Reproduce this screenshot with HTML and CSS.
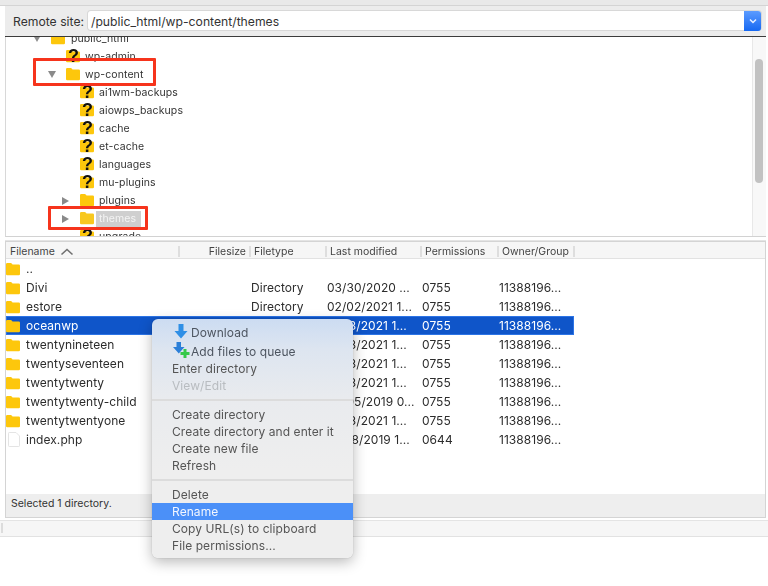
FILE: index.html
```html
<!DOCTYPE html>
<html lang="en">
<head>
<meta charset="utf-8">
<title>Remote site</title>
<link rel="stylesheet" href="styles.css">
</head>
<body>
<svg class="defs" width="0" height="0" aria-hidden="true">
  <symbol id="folder" viewBox="0 0 14 14">
    <path d="M0 2.2Q0 1 1.2 1H4.6Q5.4 1 6 1.8L6.5 2.5H12.8Q14 2.5 14 3.7V12Q14 13.2 12.8 13.2H1.2Q0 13.2 0 12Z" fill="#fdc70c"/>
  </symbol>
  <symbol id="unknown" viewBox="0 0 14 16">
    <path d="M0 3.2Q0 2 1.2 2H4.6Q5.4 2 6 2.8L6.5 3.5H12.8Q14 3.5 14 4.7V13Q14 14.2 12.8 14.2H1.2Q0 14.2 0 13Z" fill="#fdc70c"/>
    <text x="7.5" y="14.2" text-anchor="middle" class="qmark">?</text>
  </symbol>
  <symbol id="file" viewBox="0 0 12 15">
    <path d="M.5 1.2Q.5.5 1.2.5H8L11.5 4V13.8Q11.5 14.5 10.8 14.5H1.2Q.5 14.5.5 13.8Z" fill="#fff" stroke="#e4e4e4"/>
  </symbol>
</svg>
<div class="app">
  <div class="topstrip"></div>
  <div class="sitebar">
    <span class="sitelabel">Remote site:</span>
    <div class="sitefield">
      <span class="sitepath">/public_html/wp-content/themes</span>
      <span class="dropbtn"><svg width="8" height="6" viewBox="0 0 8 6"><path d="M1 1.5L4 4.5L7 1.5" fill="none" stroke="#e8f0ff" stroke-width="1.5"/></svg></span>
    </div>
  </div>
  <section class="tree">
    <div class="treebody">
      <div class="trow lvl1"><span class="tw"><i class="tri down"></i></span><svg class="ic"><use href="#folder"/></svg><span>public_html</span></div>
      <div class="trow lvl2"><span class="tw"></span><svg class="ic q"><use href="#unknown"/></svg><span>wp-admin</span></div>
      <div class="trow lvl2"><span class="tw"><i class="tri down"></i></span><svg class="ic"><use href="#folder"/></svg><span>wp-content</span></div>
      <div class="trow lvl3"><span class="tw"></span><svg class="ic q"><use href="#unknown"/></svg><span>ai1wm-backups</span></div>
      <div class="trow lvl3"><span class="tw"></span><svg class="ic q"><use href="#unknown"/></svg><span>aiowps_backups</span></div>
      <div class="trow lvl3"><span class="tw"></span><svg class="ic q"><use href="#unknown"/></svg><span>cache</span></div>
      <div class="trow lvl3"><span class="tw"></span><svg class="ic q"><use href="#unknown"/></svg><span>et-cache</span></div>
      <div class="trow lvl3"><span class="tw"></span><svg class="ic q"><use href="#unknown"/></svg><span>languages</span></div>
      <div class="trow lvl3"><span class="tw"></span><svg class="ic q"><use href="#unknown"/></svg><span>mu-plugins</span></div>
      <div class="trow lvl3"><span class="tw"><i class="tri right"></i></span><svg class="ic"><use href="#folder"/></svg><span>plugins</span></div>
      <div class="trow lvl3"><span class="tw"><i class="tri right"></i></span><svg class="ic dark"><use href="#folder"/></svg><span class="picked">themes</span></div>
      <div class="trow lvl3"><span class="tw"></span><svg class="ic q"><use href="#unknown"/></svg><span>upgrade</span></div>
      <div class="mark mark-content"></div>
      <div class="mark mark-themes"></div>
    </div>
    <div class="scrolltrack"><div class="scrollthumb"></div></div>
  </section>
  <section class="list">
    <div class="lhead">
      <span class="hname">Filename <svg width="14" height="8" viewBox="0 0 14 8"><path d="M1.5 6.5L7 1.5L12.5 6.5" fill="none" stroke="#707070" stroke-width="1.6"/></svg></span>
      <span class="hsize">Filesize</span>
      <span>Filetype</span>
      <span>Last modified</span>
      <span>Permissions</span>
      <span>Owner/Group</span>
    </div>
    <div class="lrows">
      <div class="lrow"><span class="cname"><svg class="ficon"><use href="#folder"/></svg>..</span></div>
      <div class="lrow"><span class="cname"><svg class="ficon"><use href="#folder"/></svg>Divi</span><span>Directory</span><span>03/30/2020 ...</span><span>0755</span><span>11388196...</span></div>
      <div class="lrow"><span class="cname"><svg class="ficon"><use href="#folder"/></svg>estore</span><span>Directory</span><span>02/02/2021 1...</span><span>0755</span><span>11388196...</span></div>
      <div class="lrow selected"><span class="cname"><svg class="ficon"><use href="#folder"/></svg>oceanwp</span><span>Directory</span><span>01/18/2021 1...</span><span>0755</span><span>11388196...</span></div>
      <div class="lrow"><span class="cname"><svg class="ficon"><use href="#folder"/></svg>twentynineteen</span><span>Directory</span><span>01/18/2021 1...</span><span>0755</span><span>11388196...</span></div>
      <div class="lrow"><span class="cname"><svg class="ficon"><use href="#folder"/></svg>twentyseventeen</span><span>Directory</span><span>01/18/2021 1...</span><span>0755</span><span>11388196...</span></div>
      <div class="lrow"><span class="cname"><svg class="ficon"><use href="#folder"/></svg>twentytwenty</span><span>Directory</span><span>01/18/2021 1...</span><span>0755</span><span>11388196...</span></div>
      <div class="lrow"><span class="cname"><svg class="ficon"><use href="#folder"/></svg>twentytwenty-child</span><span>Directory</span><span>03/05/2019 0...</span><span>0755</span><span>11388196...</span></div>
      <div class="lrow"><span class="cname"><svg class="ficon"><use href="#folder"/></svg>twentytwentyone</span><span>Directory</span><span>01/18/2021 1...</span><span>0755</span><span>11388196...</span></div>
      <div class="lrow"><span class="cname"><svg class="ficon fileic"><use href="#file"/></svg>index.php</span><span></span><span>01/08/2019 1...</span><span>0644</span><span>11388196...</span></div>
    </div>
    <div class="status">Selected 1 directory.</div>
  </section>
  <div class="queuehead"><i class="qsep"></i></div>
  <div class="queue"></div>

  <nav class="menu">
    <div class="mi iconed"><svg class="micon" width="16" height="17" viewBox="0 0 16 17"><path d="M5.5 1H10.5V8H14.5L8 15.5L1.5 8H5.5Z" fill="#2f8fe6"/></svg>Download</div>
    <div class="mi iconed second"><svg class="micon" width="18" height="17" viewBox="0 0 18 17"><path d="M3.5 0H8V5H11.5L5.8 11.5L0 5H3.5Z" fill="#2b7fd8"/><path d="M10.5 7H13.5V10H16.5V13H13.5V16H10.5V13H7.5V10H10.5Z" fill="#35c94a"/></svg>Add files to queue</div>
    <div class="mi">Enter directory</div>
    <div class="mi off">View/Edit</div>
    <hr class="msep">
    <div class="mi">Create directory</div>
    <div class="mi">Create directory and enter it</div>
    <div class="mi">Create new file</div>
    <div class="mi">Refresh</div>
    <hr class="msep">
    <div class="mi">Delete</div>
    <div class="mi active">Rename</div>
    <div class="mi">Copy URL(s) to clipboard</div>
    <div class="mi">File permissions...</div>
  </nav>
</div>
</body>
</html>
```
FILE: styles.css
```css
* { box-sizing: border-box; }
html, body { margin: 0; padding: 0; }
body {
  width: 768px;
  height: 586px;
  overflow: hidden;
  background: #fff;
  font-family: Inter, "Liberation Sans", sans-serif;
  font-size: 12px;
  color: #2c2c2c;
}
.defs { position: absolute; }
.qmark { font: 700 18px "Liberation Sans", sans-serif; fill: #111; }

.app {
  position: relative;
  height: 586px;
  display: flex;
  flex-direction: column;
  filter: blur(0.35px);
}
.topstrip {
  height: 6px;
  background: #e9e9e9;
  border-bottom: 1px solid #d4d4d4;
}
.sitebar {
  height: 31px;
  margin: 0 2px 0 5px;
  padding: 5px 5px 0 8px;
  display: flex;
  gap: 5px;
  background: #ececec;
  border-bottom: 1px solid #3c3c3c;
  align-items: flex-start;
}
.sitelabel { font-size: 12.2px; line-height: 20px; color: #333; width: 70px; flex: none; margin-top: 1px; white-space: nowrap; }
.sitefield {
  flex: 1;
  height: 19px;
  display: flex;
  justify-content: space-between;
  background: #fff;
  border-radius: 3px;
  box-shadow: 0 0 0 1px #d8d8d8;
}
.sitepath { font-size: 12.2px; line-height: 22px; padding-left: 3px; color: #333; }
.dropbtn {
  width: 17px;
  height: 20px;
  display: flex;
  align-items: center;
  justify-content: center;
  background: linear-gradient(#5b9bff, #1668f2);
  border-radius: 0 3px 3px 0;
}

.tree {
  height: 200px;
  margin: 0 2px 0 5px;
  display: flex;
  background: #fff;
  border-bottom: 1px solid #d2d2d2;
  border-left: 1px solid #d8d8d8;
  overflow: hidden;
}
.treebody {
  position: relative;
  flex: 1;
  margin-top: -8px;
  font-size: 10.5px;
  color: #333;
}
.trow { height: 18px; display: flex; align-items: center; white-space: nowrap; letter-spacing: 0.1px; padding-top: 1px; }
.lvl1 { padding-left: 24px; }
.lvl2 { padding-left: 39px; }
.lvl3 { padding-left: 53px; }
.tw { width: 13px; flex: none; display: flex; justify-content: center; margin-right: 8px; }
.tri { width: 0; height: 0; display: block; }
.tri.down { border-left: 4px solid transparent; border-right: 4px solid transparent; border-top: 7px solid #8a8a8a; }
.tri.right { border-top: 4px solid transparent; border-bottom: 4px solid transparent; border-left: 7px solid #8a8a8a; }
.ic { width: 14px; height: 14px; flex: none; margin-right: 5px; margin-top: -1px; }
.lvl1 .ic { margin-right: 6px; }
.ic.q { height: 16px; overflow: visible; }
.ic.dark { opacity: 0.88; filter: saturate(1.1) brightness(0.97); }
.picked { background: #cfcfcf; color: #f4f4f4; padding: 0 5px 0 3px; margin-left: -3px; line-height: 16px; }
.mark {
  position: absolute;
  border: 3px solid #f6341c;
  border-radius: 1px;
}
.mark-content { left: 27px; top: 29px; width: 123px; height: 28px; }
.mark-themes { left: 42px; top: 177px; width: 100px; height: 24px; }
.scrolltrack {
  width: 14px;
  flex: none;
  padding: 22px 3px 0 2px;
  background: #f8f8f8;
  border-left: 1px solid #e8e8e8;
}
.scrollthumb { height: 124px; background: #c2c2c2; border-radius: 4px; }

.list {
  height: 277px;
  margin: 4px 2px 0 5px;
  display: flex;
  flex-direction: column;
  background: #fff;
  border: 1px solid #d4d4d4;
  box-shadow: 0 -1px 0 #e4e4e4;
}
.lhead {
  height: 17px;
  flex: none;
  display: grid;
  grid-template-columns: 174px 71px 76px 95px 77px 76px;
  background: #f6f6f6;
  border-bottom: 1px solid #e2e2e2;
  font-size: 10.5px;
  color: #444;
}
.lhead span { height: 11px; margin-top: 4px; line-height: 11px; padding-left: 3px; border-right: 2px solid #dedede; white-space: nowrap; }
.lhead .hname { padding-left: 4px; display: flex; gap: 5px; align-items: center; }
.lhead .hsize { text-align: right; padding: 0 3px 0 0; }
.lrows { flex: 1; font-size: 12px; letter-spacing: 0.05px; }
.lrow {
  width: 568px;
  height: 19px;
  display: grid;
  grid-template-columns: 244px 76px 95px 77px 76px;
  align-items: center;
  white-space: nowrap;
  line-height: 19px;
}
.lrow span { overflow: hidden; padding-left: 1px; }
.lrow .cname { display: flex; align-items: center; padding-left: 0; }
.ficon { width: 14px; height: 14px; margin-right: 6px; flex: none; }
.ficon.fileic { width: 12px; height: 15px; margin: 0 6px 0 2px; }
.selected { background: #0f55c9; color: #fff; box-shadow: inset 0 0 0 1px #2c74e6; }
.status {
  height: 23px;
  flex: none;
  background: #eeeeee;
  padding: 1px 0 0 5px;
  font-size: 10.5px;
  line-height: 17px;
  color: #333;
}
.queuehead {
  height: 17px;
  margin-top: 2px;
  flex: none;
  background: #f6f6f6;
  border-bottom: 1px solid #e2e2e2;
  border-top: 1px solid #e4e4e4;
  padding: 2px 0 0 1px;
}
.qsep { display: block; width: 2px; height: 10px; background: #dcdcdc; }
.queue { flex: 1; background: #fff; }

.menu {
  position: absolute;
  left: 152px;
  top: 319px;
  width: 201px;
  height: 239px;
  padding-top: 4px;
  border-radius: 6px;
  background: linear-gradient(#ccdcf2 0, #dde5f0 30px, #e9ebee 80px, #eeeeee 150px);
  box-shadow: 0 0 1px rgba(0,0,0,.35), 0 4px 14px rgba(0,0,0,.28);
  color: #555;
  font-size: 12px;
  letter-spacing: 0.08px;
}
.mi { height: 17px; line-height: 17px; padding-left: 20px; white-space: nowrap; }
.mi.iconed { height: 19px; line-height: 19px; padding-left: 39px; position: relative; color: #4d5560; }
.mi.iconed.second { height: 18px; }
.micon { position: absolute; left: 21px; top: 0; }
.mi.off { color: #b8bcc0; }
.mi.active { background: #4b90f8; color: #f2f6ff; }
.msep { height: 2px; margin: 5px 0; border: 0; background: #dcdcdc; }
```
